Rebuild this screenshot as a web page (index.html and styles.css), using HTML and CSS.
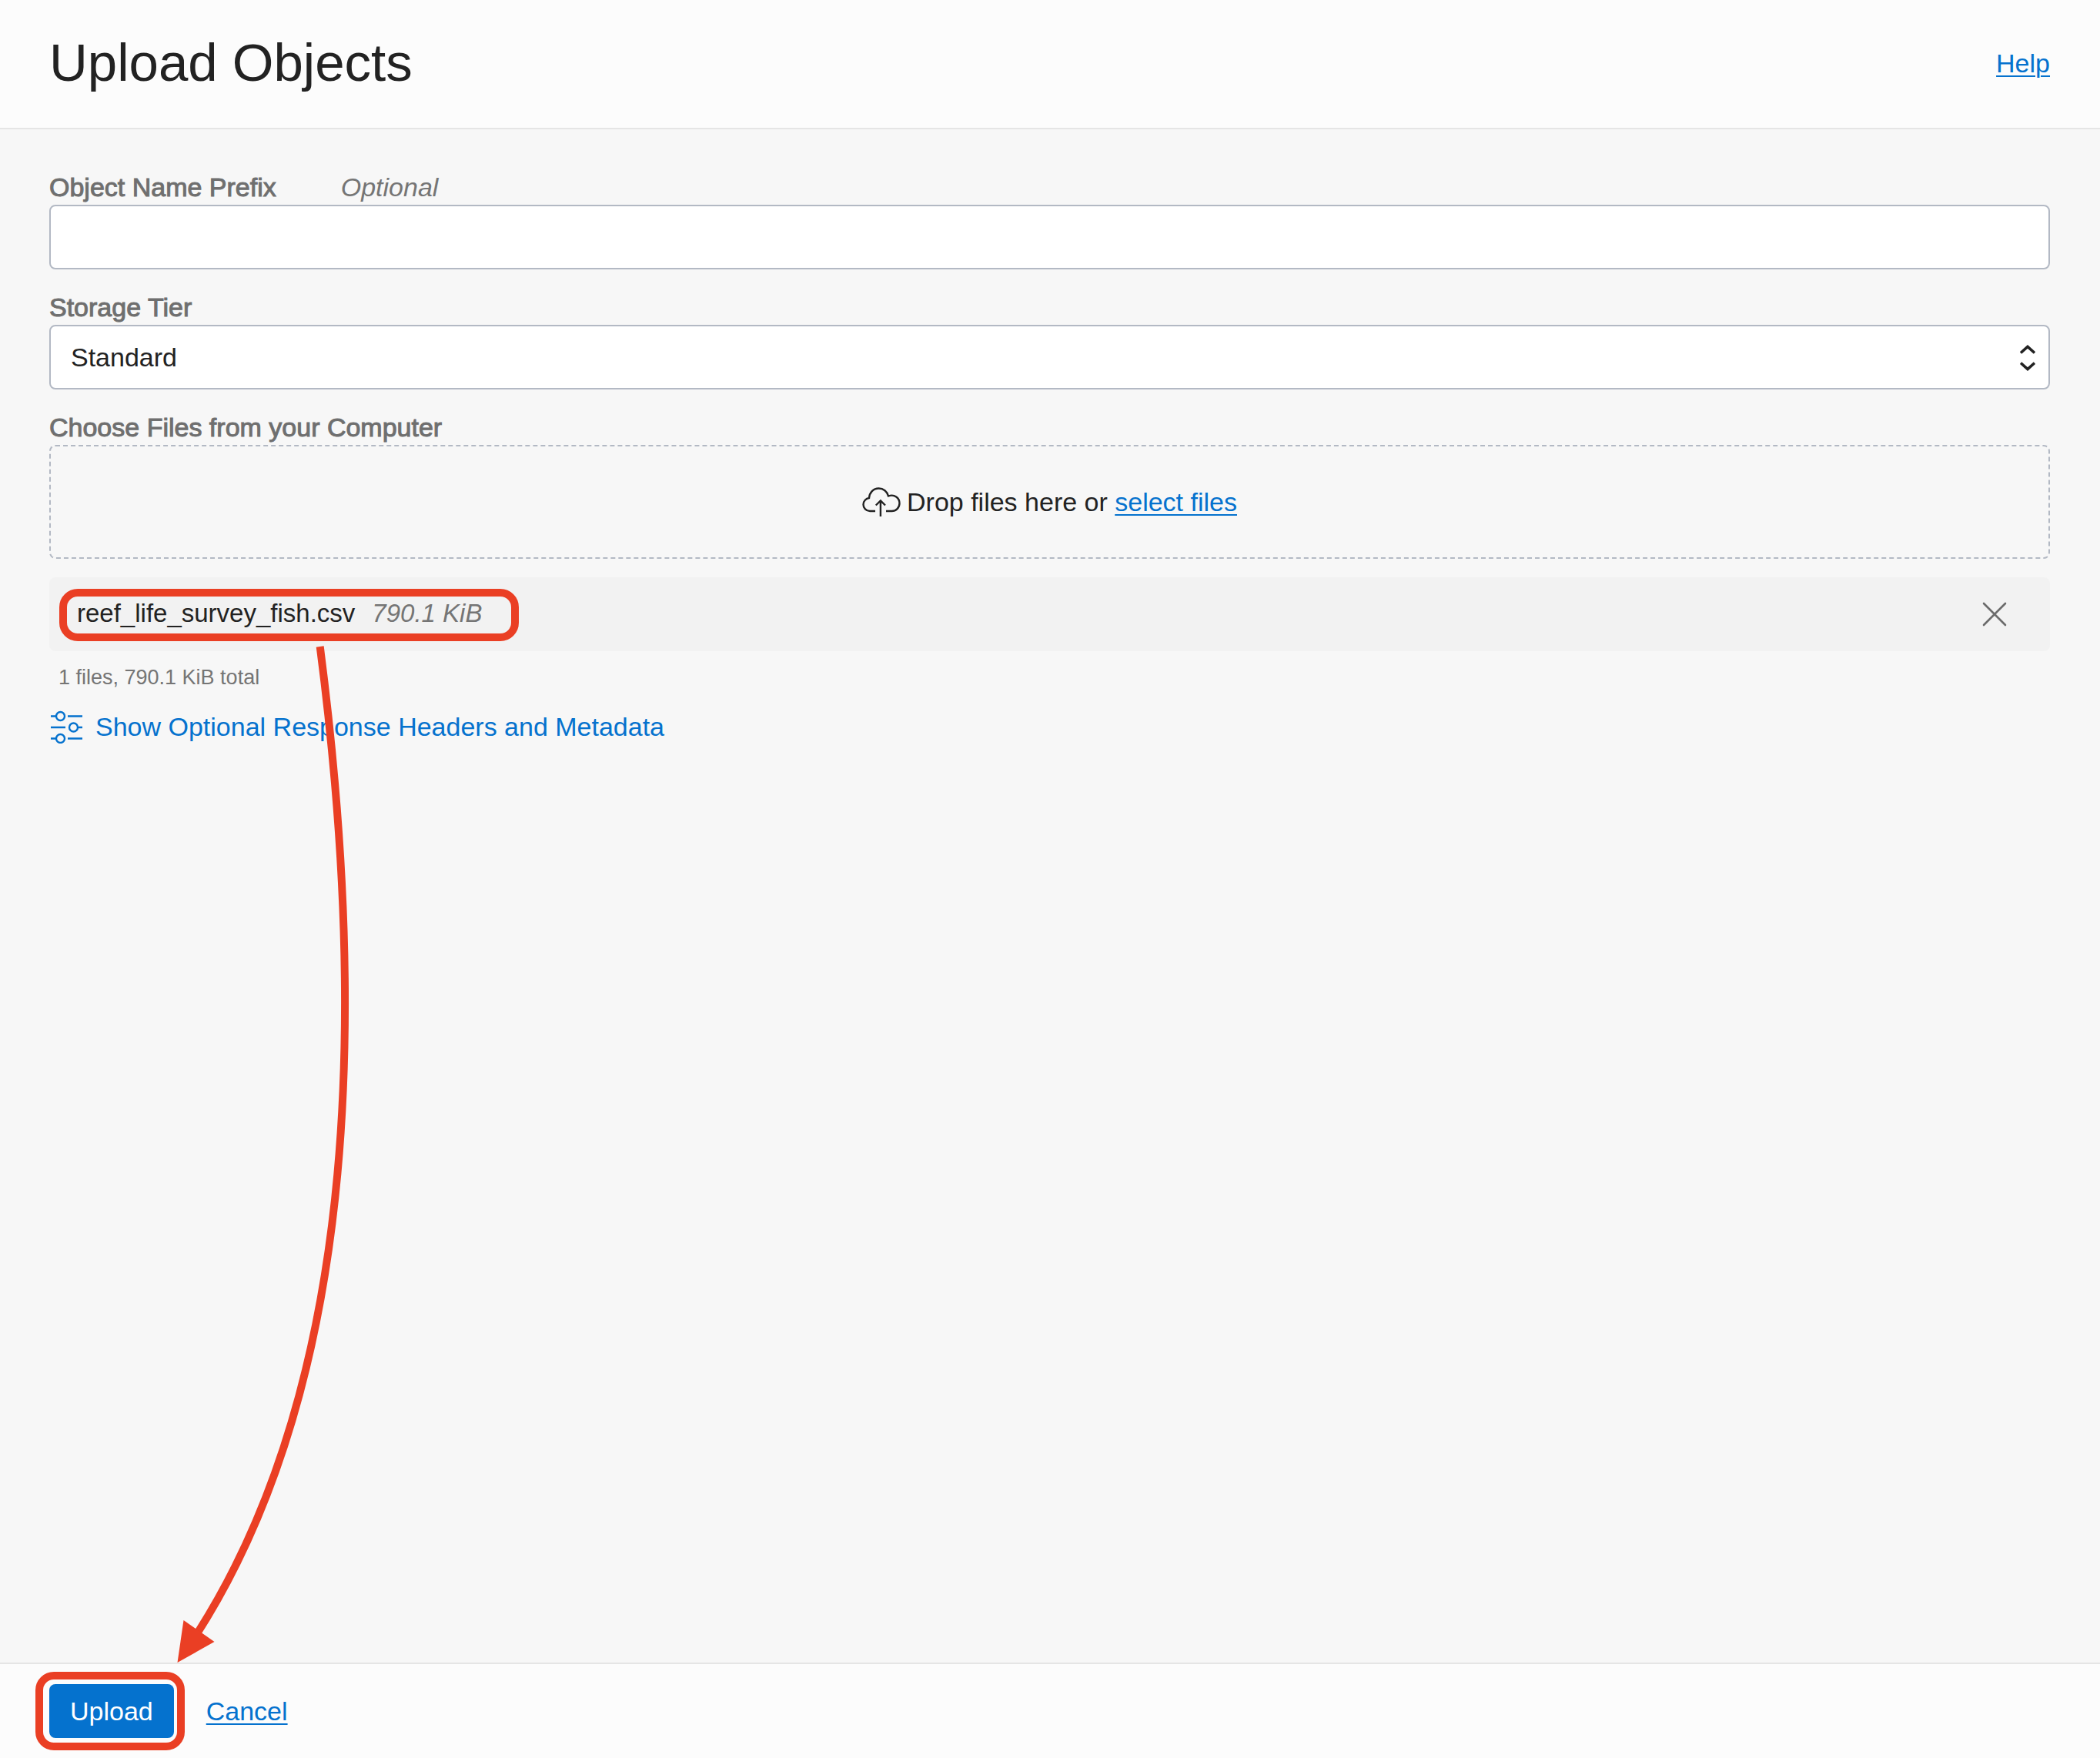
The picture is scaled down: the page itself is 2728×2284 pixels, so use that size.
FILE: index.html
```
<!DOCTYPE html>
<html lang="en">
<head>
  <meta charset="utf-8">
  <meta name="viewport" content="width=device-width, initial-scale=1">
  <title>Upload Objects</title>
  <link rel="stylesheet" href="styles.css">
</head>
<body>
  <form class="panel">
    <header class="panel-header">
      <h1 class="title">Upload Objects</h1>
      <a class="link" href="#help">Help</a>
    </header>

    <main class="panel-body">
      <div class="field">
        <div class="label-row">
          <label class="label" for="prefix">Object Name Prefix</label>
          <span class="optional">Optional</span>
        </div>
        <input class="control" id="prefix" type="text">
      </div>

      <div class="field">
        <label class="label" for="tier">Storage Tier</label>
        <div class="select-wrap">
          <select class="control select" id="tier">
            <option selected>Standard</option>
            <option>Infrequent Access</option>
            <option>Archive</option>
          </select>
          <svg class="select-icon" width="20" height="34" viewBox="0 0 20 34" fill="none" stroke="#222" stroke-width="3.600" aria-hidden="true">
            <path d="M1 10.500 10 2.500 19 10.500M1 23.500 10 31.500 19 23.500"/>
          </svg>
        </div>
      </div>

      <div class="field">
        <span class="label" id="files-label">Choose Files from your Computer</span>
        <div class="dropzone" role="group" aria-labelledby="files-label">
          <svg class="cloud" width="50" height="38" viewBox="0 0 50 38" fill="none" stroke="#222" stroke-width="2.400" aria-hidden="true">
            <path d="M17 31H10C5 31 1.500 27 1.500 22.500 1.500 18 5 14.500 9 14 9.500 7 14.500 1.500 21.500 1.500 27.500 1.500 32.500 5.500 34 11.500 42 8.500 48.500 14 48.500 21 48.500 26.500 44 31 38.500 31H31"/>
            <path d="M23.900 38V17.500M17.800 23.500 23.900 17.500 30 23.500"/>
          </svg>
          <span>Drop files here or <a class="link" href="#select">select files</a></span>
        </div>
      </div>

      <div class="file-row">
        <div class="file-info">
          <span>reef_life_survey_fish.csv</span>
          <span class="file-size">790.1 KiB</span>
        </div>
        <button class="remove" type="button" aria-label="Remove file">
          <svg width="32" height="32" viewBox="0 0 32 32" fill="none" stroke="#6b6b6b" stroke-width="2.600" stroke-linecap="round" aria-hidden="true">
            <path d="M2 2 30 30M30 2 2 30"/>
          </svg>
        </button>
      </div>
      <p class="summary">1 files, 790.1 KiB total</p>

      <a class="options" href="#options">
        <svg width="42" height="44" viewBox="0 -1 42 44" fill="none" stroke="#0572ce" stroke-width="2.400" aria-hidden="true">
          <path d="M0 7.500H7M22 7.500H41M0 22H19M36 22H41M0 36.500H7M22 36.500H41"/>
          <circle cx="12.500" cy="7.500" r="5.500"/><circle cx="29.500" cy="22" r="5.500"/><circle cx="12.500" cy="36.500" r="5.500"/>
        </svg>
        <span>Show Optional Response Headers and Metadata</span>
      </a>
    </main>

    <footer class="panel-footer">
      <span class="upload-wrap"><button class="upload" type="submit">Upload</button></span>
      <a class="link" href="#cancel">Cancel</a>
    </footer>

    <svg class="arrow" width="460" height="1340" viewBox="0 830 460 1340" aria-hidden="true">
      <path d="M415.700 840Q527.300 1702 254 2125.500" fill="none" stroke="#ea3f24" stroke-width="10"/>
      <path d="M230.500 2160 238.500 2105 278.500 2133Z" fill="#ea3f24"/>
    </svg>
  </form>
</body>
</html>
```
FILE: styles.css
```
* {
  box-sizing: border-box;
}

body {
  margin: 0;
  background: #f7f7f7;
  color: #222;
  font: 34px/44px "Liberation Sans", Arial, sans-serif;
}

.panel {
  position: relative;
  display: flex;
  flex-direction: column;
  min-height: 100vh;
}

.panel-header,
.panel-footer {
  display: flex;
  align-items: center;
  padding: 0 65px 0 64px;
  background: #fcfcfc;
}

.panel-header {
  justify-content: space-between;
  padding-top: 42px;
  padding-bottom: 44px;
  border-bottom: 2px solid #e5e5e5;
}

.title {
  margin: 0;
  font-size: 69px;
  line-height: 80px;
  font-weight: 400;
}

.link {
  color: #0572ce;
  text-decoration: underline;
  text-decoration-thickness: 2px;
  text-underline-offset: 4px;
}

.panel-body {
  flex: 1;
  padding: 54px 65px 40px 64px;
}

.field {
  margin-bottom: 28px;
}

.label-row {
  display: flex;
  gap: 84px;
}

.label {
  display: block;
  margin-bottom: 2px;
  color: #6f6f6f;
  line-height: 42px;
  -webkit-text-stroke: 1px #6f6f6f;
}

.optional {
  line-height: 42px;
}

.optional,
.file-size {
  color: #757575;
  font-style: italic;
}

.control {
  display: block;
  width: 100%;
  height: 84px;
  padding: 0 26px;
  border: 2px solid #b3b9c4;
  border-radius: 8px;
  background: #fff;
  color: #222;
  font: inherit;
}

.select-wrap {
  position: relative;
}

.select {
  appearance: none;
}

.select-icon {
  position: absolute;
  top: 26px;
  right: 19px;
  pointer-events: none;
}

.dropzone {
  display: flex;
  align-items: center;
  justify-content: center;
  gap: 8px;
  height: 148px;
  border: 2px dashed #b3b9c4;
  border-radius: 8px;
}

.file-row {
  display: flex;
  align-items: center;
  justify-content: space-between;
  height: 96px;
  margin-top: -4px;
  padding: 0 56px 0 13px;
  border-radius: 8px;
  background: #f2f2f2;
}

.file-info {
  display: flex;
  gap: 22px;
  margin-top: 2px;
  padding: 0 38px 4px 13px;
  border: 10px solid #ea3f24;
  border-radius: 24px;
  font-size: 33px;
}

.remove {
  display: flex;
  padding: 0;
  border: 0;
  background: none;
}

.summary {
  margin: 12px 0 20px;
  padding-left: 12px;
  color: #757575;
  font-size: 27px;
}

.options {
  display: inline-flex;
  align-items: center;
  gap: 16px;
  padding-left: 2px;
  color: #0572ce;
  text-decoration: none;
}

.panel-footer {
  gap: 42px;
  padding-top: 26px;
  padding-bottom: 26px;
  border-top: 2px solid #e5e5e5;
}

.upload-wrap {
  position: relative;
}

.upload-wrap::after {
  content: "";
  position: absolute;
  inset: -16px -14px -16px -18px;
  border: 10px solid #ea3f24;
  border-radius: 24px;
  pointer-events: none;
}

.upload {
  display: block;
  height: 70px;
  padding: 0 27px;
  border: 0;
  border-radius: 8px;
  background: #0572ce;
  color: #fff;
  font: inherit;
}

.arrow {
  position: absolute;
  left: 0;
  top: 830px;
  pointer-events: none;
}
```
